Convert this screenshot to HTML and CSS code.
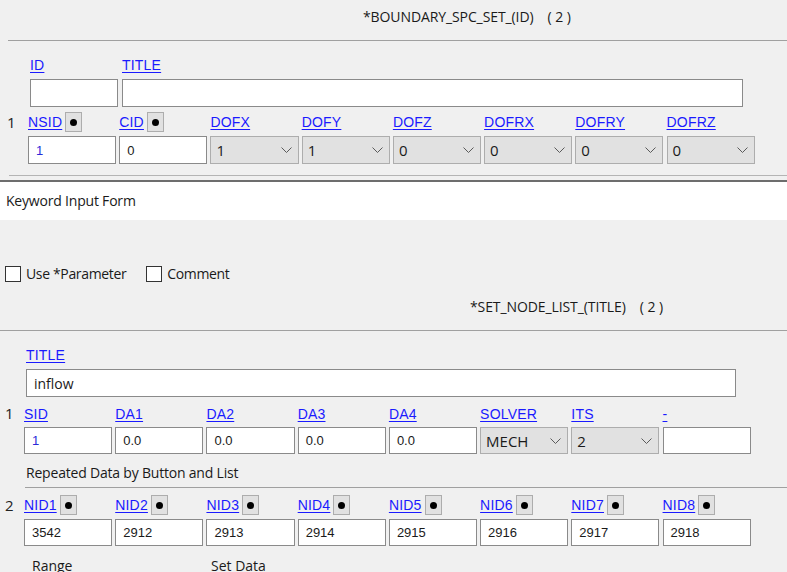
FILE: index.html
```html
<!DOCTYPE html>
<html>
<head>
<meta charset="utf-8">
<link rel="stylesheet" href="styles.css">
</head>
<body>
<div class="app">
  <section class="panel top">
    <div class="kw-title t1">*BOUNDARY_SPC_SET_(ID)&nbsp;&nbsp;&nbsp;&nbsp;(&nbsp;2&nbsp;)</div>
    <div class="rule r-top"></div>

    <div class="idblock">
      <div class="field f-id">
        <div class="lab lab-plain"><a class="lnk">ID</a></div>
        <div class="inp h28"></div>
      </div>
      <div class="field f-title">
        <div class="lab lab-plain"><a class="lnk">TITLE</a></div>
        <div class="inp h28"></div>
      </div>
    </div>

    <div class="card-row row-a">
      <span class="rownum">1</span>
      <div class="grid">
        <div class="field">
          <div class="lab"><a class="lnk">NSID</a><span class="pick"><i></i></span></div>
          <div class="inp h28 blue">1</div>
        </div>
        <div class="field">
          <div class="lab"><a class="lnk">CID</a><span class="pick"><i></i></span></div>
          <div class="inp h28">0</div>
        </div>
        <div class="field">
          <div class="lab"><a class="lnk">DOFX</a></div>
          <div class="sel h28"><span>1</span><svg width="11" height="6" viewBox="0 0 11 6"><path d="M0.5 0.5 L5.5 5.5 L10.5 0.5" stroke="#5a5a5a" fill="none"/></svg></div>
        </div>
        <div class="field">
          <div class="lab"><a class="lnk">DOFY</a></div>
          <div class="sel h28"><span>1</span><svg width="11" height="6" viewBox="0 0 11 6"><path d="M0.5 0.5 L5.5 5.5 L10.5 0.5" stroke="#5a5a5a" fill="none"/></svg></div>
        </div>
        <div class="field">
          <div class="lab"><a class="lnk">DOFZ</a></div>
          <div class="sel h28"><span>0</span><svg width="11" height="6" viewBox="0 0 11 6"><path d="M0.5 0.5 L5.5 5.5 L10.5 0.5" stroke="#5a5a5a" fill="none"/></svg></div>
        </div>
        <div class="field">
          <div class="lab"><a class="lnk">DOFRX</a></div>
          <div class="sel h28"><span>0</span><svg width="11" height="6" viewBox="0 0 11 6"><path d="M0.5 0.5 L5.5 5.5 L10.5 0.5" stroke="#5a5a5a" fill="none"/></svg></div>
        </div>
        <div class="field">
          <div class="lab"><a class="lnk">DOFRY</a></div>
          <div class="sel h28"><span>0</span><svg width="11" height="6" viewBox="0 0 11 6"><path d="M0.5 0.5 L5.5 5.5 L10.5 0.5" stroke="#5a5a5a" fill="none"/></svg></div>
        </div>
        <div class="field">
          <div class="lab"><a class="lnk">DOFRZ</a></div>
          <div class="sel h28"><span>0</span><svg width="11" height="6" viewBox="0 0 11 6"><path d="M0.5 0.5 L5.5 5.5 L10.5 0.5" stroke="#5a5a5a" fill="none"/></svg></div>
        </div>
      </div>
    </div>

    <div class="rule r-light"></div>
  </section>

  <div class="band">Keyword Input Form</div>

  <section class="panel second">
    <div class="checks">
      <label class="chk"><span class="box"></span>Use *Parameter</label>
      <label class="chk"><span class="box"></span>Comment</label>
    </div>
    <div class="kw-title t2">*SET_NODE_LIST_(TITLE)&nbsp;&nbsp;&nbsp;&nbsp;(&nbsp;2&nbsp;)</div>
    <div class="rule r-full"></div>

    <div class="titleblock">
      <div class="lab lab-plain"><a class="lnk">TITLE</a></div>
      <div class="inp h28 title-inp">inflow</div>
    </div>

    <div class="card-row row-b">
      <span class="rownum">1</span>
      <div class="grid">
        <div class="field">
          <div class="lab lab-plain"><a class="lnk">SID</a></div>
          <div class="inp h27 blue">1</div>
        </div>
        <div class="field">
          <div class="lab lab-plain"><a class="lnk">DA1</a></div>
          <div class="inp h27">0.0</div>
        </div>
        <div class="field">
          <div class="lab lab-plain"><a class="lnk">DA2</a></div>
          <div class="inp h27">0.0</div>
        </div>
        <div class="field">
          <div class="lab lab-plain"><a class="lnk">DA3</a></div>
          <div class="inp h27">0.0</div>
        </div>
        <div class="field">
          <div class="lab lab-plain"><a class="lnk">DA4</a></div>
          <div class="inp h27">0.0</div>
        </div>
        <div class="field">
          <div class="lab lab-plain"><a class="lnk">SOLVER</a></div>
          <div class="sel h27"><span>MECH</span><svg width="11" height="6" viewBox="0 0 11 6"><path d="M0.5 0.5 L5.5 5.5 L10.5 0.5" stroke="#5a5a5a" fill="none"/></svg></div>
        </div>
        <div class="field">
          <div class="lab lab-plain"><a class="lnk">ITS</a></div>
          <div class="sel h27"><span>2</span><svg width="11" height="6" viewBox="0 0 11 6"><path d="M0.5 0.5 L5.5 5.5 L10.5 0.5" stroke="#5a5a5a" fill="none"/></svg></div>
        </div>
        <div class="field">
          <div class="lab lab-plain"><a class="lnk">-</a></div>
          <div class="inp h27"></div>
        </div>
      </div>
    </div>

    <div class="subhead">Repeated Data by Button and List</div>
    <div class="rule r-sub"></div>

    <div class="card-row row-c">
      <span class="rownum">2</span>
      <div class="grid">
        <div class="field"><div class="lab"><a class="lnk">NID1</a><span class="pick"><i></i></span></div><div class="inp h27">3542</div></div>
        <div class="field"><div class="lab"><a class="lnk">NID2</a><span class="pick"><i></i></span></div><div class="inp h27">2912</div></div>
        <div class="field"><div class="lab"><a class="lnk">NID3</a><span class="pick"><i></i></span></div><div class="inp h27">2913</div></div>
        <div class="field"><div class="lab"><a class="lnk">NID4</a><span class="pick"><i></i></span></div><div class="inp h27">2914</div></div>
        <div class="field"><div class="lab"><a class="lnk">NID5</a><span class="pick"><i></i></span></div><div class="inp h27">2915</div></div>
        <div class="field"><div class="lab"><a class="lnk">NID6</a><span class="pick"><i></i></span></div><div class="inp h27">2916</div></div>
        <div class="field"><div class="lab"><a class="lnk">NID7</a><span class="pick"><i></i></span></div><div class="inp h27">2917</div></div>
        <div class="field"><div class="lab"><a class="lnk">NID8</a><span class="pick"><i></i></span></div><div class="inp h27">2918</div></div>
      </div>
    </div>

    <div class="foot">
      <span class="foot-range">Range</span>
      <span class="foot-set">Set Data</span>
    </div>
  </section>
</div>
</body>
</html>
```

FILE: styles.css
```css
* { box-sizing: border-box; }
html, body { margin: 0; padding: 0; }
body {
  width: 787px;
  height: 572px;
  overflow: hidden;
  background: #f0f0f0;
  font-family: "Open Sans", "Noto Sans", sans-serif;
  color: #1a1a1a;
}
.app { display: flex; flex-direction: column; }

.panel { display: flex; flex-direction: column; background: #f0f0f0; }

.kw-title {
  font-size: 14px;
  color: #1a1a1a;
  white-space: nowrap;
  letter-spacing: -0.1px;
}
.t1 { height: 40px; line-height: 34px; padding-left: 363px; }
.t2 { margin-top: 15px; height: 20px; line-height: 20px; padding-left: 470px; }

.rule { height: 1px; background: #a0a0a0; }
.r-top { margin-left: 8px; }
.r-light { margin-top: 11px; margin-left: 9px; background: #b4b4b4; }
.r-full { margin-top: 13px; }
.r-sub { margin-top: 5px; margin-left: 25px; }
.top { padding-bottom: 4px; border-bottom: 2px solid #6d6d6d; }

.lnk {
  font-family: "Liberation Sans", Arial, sans-serif;
  font-size: 14px;
  color: #1a1aff;
  text-decoration: underline;
  text-underline-offset: 2px;
  letter-spacing: 0.2px;
}

.field { display: flex; flex-direction: column; }
.lab { display: flex; align-items: center; gap: 3px; height: 20px; }
.lab-plain { height: 18px; }

.inp {
  background: #fff;
  border: 1px solid #8a8a8a;
  font-family: "Liberation Sans", Arial, sans-serif;
  font-size: 13px;
  color: #1a1a1a;
  padding-left: 7px;
  display: flex;
  align-items: center;
}
.inp.blue { color: #2a2ad8; }
.h28 { height: 28px; }
.h27 { height: 27px; }

.sel {
  background: #e1e1e1;
  border: 1px solid #adadad;
  display: flex;
  align-items: center;
  justify-content: space-between;
  padding: 0 6px 0 5px;
  font-size: 15px;
  color: #1a1a1a;
}
.sel svg { display: block; }

.pick {
  width: 17px;
  height: 20px;
  background: #e1e1e1;
  border: 1px solid #adadad;
  display: flex;
  align-items: center;
  justify-content: center;
}
.pick i {
  display: block;
  width: 7px;
  height: 7px;
  border-radius: 50%;
  background: #000;
}

/* ID / TITLE block */
.idblock { display: flex; margin-top: 15px; padding-left: 30px; gap: 4px; }
.idblock .lab { margin-bottom: 5px; }
.f-id { width: 88px; }
.f-title { width: 621px; }

.card-row { display: flex; }
.rownum {
  font-size: 15px;
  color: #222;
  width: 0;
  white-space: nowrap;
}
.grid {
  display: grid;
  grid-template-columns: repeat(8, 88.1px);
  column-gap: 3.14px;
}
.row-a { margin-top: 5px; padding-left: 28px; }
.row-a .rownum { margin-left: -21px; margin-top: 0px; margin-right: 21px; }
.row-a .lab { margin-bottom: 4px; }

.band {
  height: 38px;
  background: #fff;
  font-size: 14px;
  letter-spacing: -0.2px;
  line-height: 37px;
  padding-left: 6px;
  color: #1a1a1a;
}

.second { flex: 1; }
.checks { display: flex; margin-top: 46px; padding-left: 5px; height: 16px; }
.chk {
  display: flex;
  align-items: center;
  font-size: 14px;
  letter-spacing: -0.35px;
  color: #1a1a1a;
  gap: 5px;
  margin-right: 20px;
  line-height: 16px;
}
.box {
  width: 16px;
  height: 16px;
  background: #fff;
  border: 1px solid #333;
}

.titleblock { margin-top: 15px; padding-left: 26px; width: 736px; }
.titleblock .lab { margin-bottom: 5px; }
.title-inp { font-family: "Open Sans", "Noto Sans", sans-serif; font-size: 14px; }

.row-b { margin-top: 8px; padding-left: 24px; }
.row-b .rownum { margin-left: -19px; margin-top: -2px; margin-right: 19px; }
.row-b .lab { margin-bottom: 4px; }

.subhead {
  margin-top: 10px;
  padding-left: 26px;
  height: 18px;
  line-height: 18px;
  font-size: 14px;
  letter-spacing: -0.2px;
}

.row-c { margin-top: 7px; padding-left: 24px; }
.row-c .rownum { margin-left: -19px; margin-top: 0px; margin-right: 19px; }
.row-c .lab { margin-bottom: 4px; }

.foot {
  margin-top: 11px;
  display: flex;
  height: 18px;
  line-height: 18px;
  font-size: 14px;
}
.foot-range { padding-left: 32px; width: 211px; }
```
